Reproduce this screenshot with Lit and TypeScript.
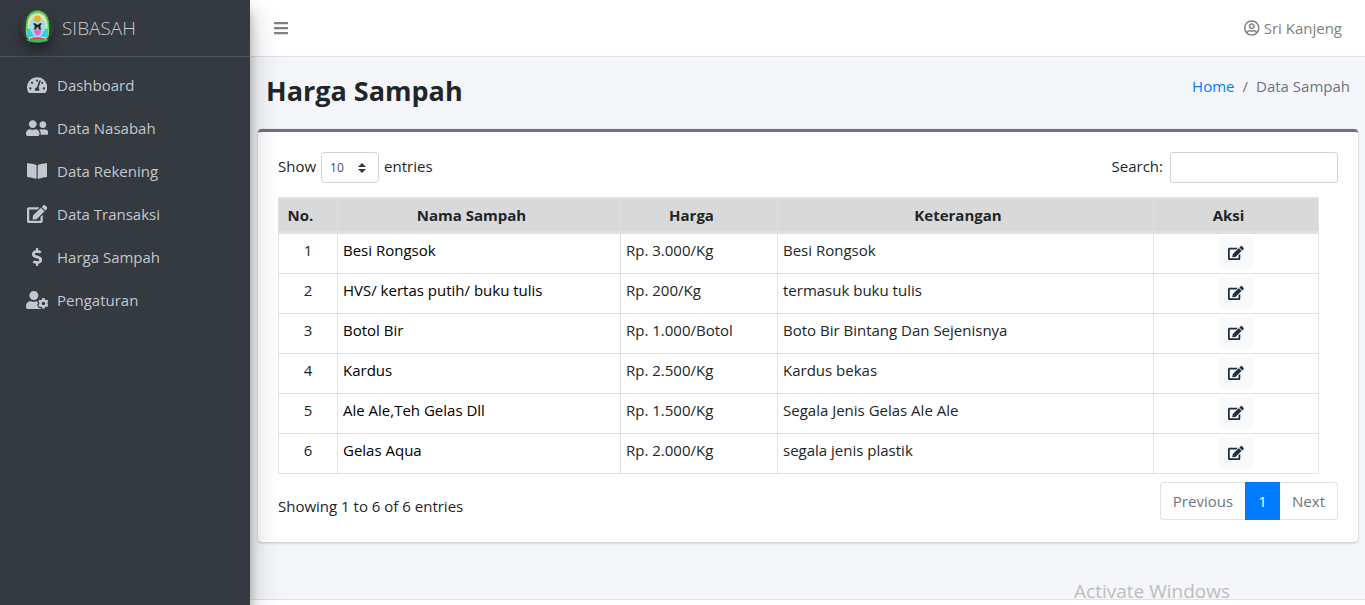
import { LitElement, html, svg, css } from "lit";
import { customElement, property, state } from "lit/decorators.js";

interface Glyph {
  w: number;
  d: string;
}

const GLYPHS: Record<string, Glyph> = {
  bars: {
    w: 448,
    d: "M16 132h416c8.837 0 16-7.163 16-16V76c0-8.837-7.163-16-16-16H16C7.163 60 0 67.163 0 76v40c0 8.837 7.163 16 16 16zm0 160h416c8.837 0 16-7.163 16-16v-40c0-8.837-7.163-16-16-16H16c-8.837 0-16 7.163-16 16v40c0 8.837 7.163 16 16 16zm0 160h416c8.837 0 16-7.163 16-16v-40c0-8.837-7.163-16-16-16H16c-8.837 0-16 7.163-16 16v40c0 8.837 7.163 16 16 16z",
  },
  gauge: {
    w: 576,
    d: "M288 32C128.94 32 0 160.94 0 320c0 52.8 14.25 102.26 39.06 144.8 5.61 9.62 16.3 15.2 27.44 15.2h443c11.14 0 21.83-5.58 27.44-15.2C561.75 422.26 576 372.8 576 320c0-159.06-128.94-288-288-288zm0 64c14.71 0 26.58 10.13 30.32 23.65-1.11 2.26-2.64 4.23-3.45 6.67l-9.22 27.67c-5.13 3.49-10.97 6.01-17.64 6.01-17.67 0-32-14.33-32-32S270.33 96 288 96zM96 384c-17.67 0-32-14.33-32-32s14.33-32 32-32 32 14.33 32 32-14.33 32-32 32zm48-160c-17.67 0-32-14.33-32-32s14.33-32 32-32 32 14.33 32 32-14.33 32-32 32zm246.77-72.41l-61.33 184C343.13 347.33 352 364.54 352 384c0 11.72-3.38 22.55-8.88 32H232.88c-5.5-9.45-8.88-20.28-8.88-32 0-33.94 26.5-61.43 59.9-63.59l61.34-184.01c4.17-12.56 17.73-19.45 30.36-15.17 12.57 4.19 19.35 17.79 15.17 30.36zm14.66 57.2l15.52-46.55c3.47-1.29 7.13-2.23 11.05-2.23 17.67 0 32 14.33 32 32s-14.33 32-32 32c-11.38-.01-20.89-6.28-26.57-15.22zM480 384c-17.67 0-32-14.33-32-32s14.33-32 32-32 32 14.33 32 32-14.33 32-32 32z",
  },
  friends: {
    w: 640,
    d: "M192 256c61.9 0 112-50.1 112-112S253.9 32 192 32 80 82.1 80 144s50.1 112 112 112zm76.8 32h-8.3c-20.8 10-43.9 16-68.5 16s-47.6-6-68.5-16h-8.3C51.6 288 0 339.6 0 403.2V432c0 26.5 21.5 48 48 48h288c26.5 0 48-21.5 48-48v-28.8c0-63.6-51.6-115.2-115.2-115.2zM480 256c53 0 96-43 96-96s-43-96-96-96-96 43-96 96 43 96 96 96zm48 32h-3.8c-13.9 4.8-28.6 8-44.2 8s-30.3-3.2-44.2-8H432c-20.4 0-39.2 5.9-55.7 15.4 24.4 26.3 39.7 61.2 39.7 99.8v38.4c0 2.2-.5 4.3-.6 6.4H592c26.5 0 48-21.5 48-48 0-61.9-50.1-112-112-112z",
  },
  book: {
    w: 576,
    d: "M542.22 32.05c-54.8 3.11-163.72 14.43-230.96 55.59-4.64 2.84-7.27 7.89-7.27 13.17v363.87c0 11.55 12.63 18.85 23.28 13.49 69.18-34.82 169.23-44.32 218.7-46.92 16.89-.89 30.02-14.43 30.02-30.66V62.75c.01-17.71-15.35-31.74-33.77-30.7zM264.73 87.64C197.5 46.48 88.58 35.17 33.78 32.05 15.36 31.01 0 45.04 0 62.75V400.6c0 16.24 13.13 29.78 30.02 30.66 49.49 2.6 149.59 12.11 218.77 46.95 10.62 5.35 23.21-1.94 23.21-13.46V100.63c0-5.29-2.62-10.14-7.27-12.99z",
  },
  edit: {
    w: 576,
    d: "M402.6 83.2l90.2 90.2c3.8 3.8 3.8 10 0 13.8L274.4 405.6l-92.8 10.3c-12.4 1.4-22.9-9.1-21.5-21.5l10.3-92.8L388.8 83.2c3.8-3.8 10-3.8 13.8 0zm162-22.9l-48.8-48.8c-15.2-15.2-39.9-15.2-55.2 0l-35.4 35.4c-3.8 3.8-3.8 10 0 13.8l90.2 90.2c3.8 3.8 10 3.8 13.8 0l35.4-35.4c15.2-15.3 15.2-40 0-55.2zM384 346.2V448H64V128h229.8c3.2 0 6.2-1.3 8.5-3.5l40-40c7.6-7.6 2.2-20.5-8.5-20.5H48C21.5 64 0 85.5 0 112v352c0 26.5 21.5 48 48 48h352c26.5 0 48-21.5 48-48V306.2c0-10.7-12.9-16-20.5-8.5l-40 40c-2.2 2.3-3.5 5.3-3.5 8.5z",
  },
  dollar: {
    w: 288,
    d: "M209.2 233.4l-108-31.6C88.7 198.2 80 186.5 80 173.5c0-16.3 13.2-29.5 29.5-29.5h66.3c12.2 0 24.2 3.7 34.2 10.5 6.1 4.1 14.3 3.1 19.5-2l34.8-34c7.1-6.9 6.1-18.4-1.8-24.5C238 74.8 207.4 64.1 176 64V16c0-8.8-7.2-16-16-16h-32c-8.8 0-16 7.2-16 16v48h-2.5C45.8 64-5.4 118.7.5 183.6c4.2 46.1 39.4 83.6 83.8 96.6l102.5 30c12.5 3.7 21.2 15.3 21.2 28.3 0 16.3-13.2 29.5-29.5 29.5h-66.3C100 368 88 364.3 78 357.5c-6.1-4.1-14.3-3.1-19.5 2l-34.8 34c-7.1 6.9-6.1 18.4 1.8 24.5 24.5 19.2 55.1 29.9 86.5 30v48c0 8.8 7.2 16 16 16h32c8.8 0 16-7.2 16-16v-48.2c46.6-.9 90.3-28.6 105.7-72.7 21.5-61.6-14.6-124.8-72.5-141.7z",
  },
  cog: {
    w: 640,
    d: "M610.5 373.3c2.6-14.1 2.6-28.5 0-42.6l25.8-14.9c3-1.7 4.3-5.2 3.3-8.5-6.7-21.6-18.2-41.2-33.2-57.4-2.3-2.5-6-3.1-9-1.4l-25.8 14.9c-10.9-9.3-23.4-16.5-36.9-21.3v-29.8c0-3.4-2.4-6.4-5.7-7.1-22.3-5-45-4.8-66.2 0-3.3.7-5.7 3.7-5.7 7.1v29.8c-13.5 4.8-26 12-36.9 21.3l-25.8-14.9c-2.9-1.7-6.7-1.1-9 1.4-15 16.2-26.5 35.8-33.2 57.4-1 3.3.4 6.8 3.3 8.5l25.8 14.9c-2.6 14.1-2.6 28.5 0 42.6l-25.8 14.9c-3 1.7-4.3 5.2-3.3 8.5 6.7 21.6 18.2 41.1 33.2 57.4 2.3 2.5 6 3.1 9 1.4l25.8-14.9c10.9 9.3 23.4 16.5 36.9 21.3v29.8c0 3.4 2.4 6.4 5.7 7.1 22.3 5 45 4.8 66.2 0 3.3-.7 5.7-3.7 5.7-7.1v-29.8c13.5-4.8 26-12 36.9-21.3l25.8 14.9c2.9 1.7 6.7 1.1 9-1.4 15-16.2 26.5-35.8 33.2-57.4 1-3.3-.4-6.8-3.3-8.5l-25.8-14.9zM496 400.5c-26.8 0-48.5-21.8-48.5-48.5s21.8-48.5 48.5-48.5 48.5 21.8 48.5 48.5-21.7 48.5-48.5 48.5zM224 256c70.7 0 128-57.3 128-128S294.7 0 224 0 96 57.3 96 128s57.3 128 128 128zm201.2 226.5c-2.3-1.2-4.6-2.6-6.8-3.9l-7.9 4.6c-6 3.4-12.8 5.3-19.6 5.3-10.9 0-21.4-4.6-28.9-12.6-18.3-19.8-32.3-43.9-40.2-69.6-5.5-17.7 1.9-36.4 17.9-45.7l7.9-4.6c-.1-2.6-.1-5.2 0-7.8l-7.9-4.6c-16-9.2-23.4-28-17.9-45.7.9-2.9 2.2-5.8 3.2-8.7-3.8-.3-7.5-1.2-11.4-1.2h-16.7c-22.2 10.2-46.9 16-72.9 16s-50.6-5.8-72.9-16h-16.7C60.2 288 0 348.2 0 422.4V464c0 26.5 21.5 48 48 48h352c10.1 0 19.5-3.2 27.2-8.5-1.2-3.8-2-7.7-2-11.8v-9.2z",
  },
  account: {
    w: 496,
    d: "M248 104c-53 0-96 43-96 96s43 96 96 96 96-43 96-96-43-96-96-96zm0 144c-26.5 0-48-21.5-48-48s21.5-48 48-48 48 21.5 48 48-21.5 48-48 48zm0-240C111 8 0 119 0 256s111 248 248 248 248-111 248-248S385 8 248 8zm0 448c-49.7 0-95.1-18.3-130.1-48.4 14.9-23 40.4-38.6 69.6-39.5 20.8 6.4 40.6 9.6 60.5 9.6s39.7-3.1 60.5-9.6c29.2 1 54.7 16.5 69.6 39.5-35 30.1-80.4 48.4-130.1 48.4zm162.7-84.1c-24.4-31.4-62.1-51.9-105.1-51.9-10.2 0-26 9.6-57.6 9.6-31.5 0-47.4-9.6-57.6-9.6-42.9 0-80.6 20.5-105.1 51.9C61.9 339.2 48 299.2 48 256c0-110.3 89.7-200 200-200s200 89.7 200 200c0 43.2-13.9 83.2-37.3 115.9z",
  },
};

@customElement("fa-icon")
class FaIcon extends LitElement {
  @property() name = "bars";

  static styles = css`
    :host {
      display: inline-flex;
      flex: none;
    }
    .glyph {
      display: block;
      height: 1em;
      fill: currentColor;
    }
  `;

  render() {
    const g = GLYPHS[this.name];
    return html`<svg class="glyph" viewBox="0 0 ${g.w} 512" aria-hidden="true">
      ${svg`<path d=${g.d}></path>`}
    </svg>`;
  }
}

@customElement("app-crest")
class AppCrest extends LitElement {
  static styles = css`
    :host {
      display: block;
      flex: none;
      width: 33px;
      height: 33px;
      border-radius: 50%;
      box-shadow: 0 10px 20px rgba(0, 0, 0, 0.19), 0 6px 6px rgba(0, 0, 0, 0.23);
    }
    .crest {
      display: block;
      width: 33px;
      height: 33px;
    }
  `;

  render() {
    return html`<svg class="crest" viewBox="0 0 33 33" role="img" aria-label="Logo">
      <path d="M6 28C4 22 4 10 8 5C12-1 21-1 25 5C29 10 29 22 27 28Z" fill="#62d45c" />
      <path d="M6 27C5 19 6 12 9 7C13 2 20 2 24 7C27 12 28 19 27 27Z" fill="#e6e4b8" />
      <path
        d="M6.500 20C4.500 15 6 8 8.500 5C12.500 0 20.500 0 24.500 5C27 8 28.500 15 26.500 20"
        fill="none"
        stroke="#3cc646"
        stroke-width="1.500"
        stroke-dasharray="2 1"
      />
      <path d="M8 26C7 19 8 13 11 9C14 6 19 6 22 9C25 13 26 19 25 26Z" fill="#a9dbe4" />
      <path d="M6 19Q8 17 10 21L13 26L20 26L23 21Q25 17 27 19L27 28L6 28Z" fill="#2fd3d6" />
      <path
        d="M16.500 4l1 2.200 2.300-.8-.8 2.300 2.200 1-2.200 1 .8 2.300-2.300-.8-1 2.200-1-2.200-2.300.8.800-2.300-2.200-1 2.200-1-.8-2.300 2.300.8z"
        fill="#e0b42a"
      />
      <path d="M12.500 13l2 .5 2 1.500 2-1.500 2-.5v1.500l-1 .5v3.500l1.500 1h-3.500v-2.500l-1 .8-1-.8v2.500h-3.500l1.500-1v-3.500l-1-.5z" fill="#1f2423" />
      <path d="M12.500 21Q16.500 19 20.500 21Q20 24 16.500 26Q13 24 12.500 21Z" fill="#e65fdc" />
      <path d="M8 27.500Q16.500 25 25 27.500L26 30Q16.500 28 7 30Z" fill="#e8d8d4" />
      <path d="M9 28.500Q16.500 26 24 28.500L24 30Q16.500 28.500 9 30Z" fill="#d04456" />
      <path d="M5 29.500Q16.500 28.500 28 29.500Q26 32.500 16.500 32.500Q7 32.500 5 29.500Z" fill="#2fc24c" />
    </svg>`;
  }
}

const MENU = [
  { icon: "gauge", label: "Dashboard" },
  { icon: "friends", label: "Data Nasabah" },
  { icon: "book", label: "Data Rekening" },
  { icon: "edit", label: "Data Transaksi" },
  { icon: "dollar", label: "Harga Sampah" },
  { icon: "cog", label: "Pengaturan" },
];

const ROWS = [
  { name: "Besi Rongsok", price: "Rp. 3.000/Kg", note: "Besi Rongsok" },
  { name: "HVS/ kertas putih/ buku tulis", price: "Rp. 200/Kg", note: "termasuk buku tulis" },
  { name: "Botol Bir", price: "Rp. 1.000/Botol", note: "Boto Bir Bintang Dan Sejenisnya" },
  { name: "Kardus", price: "Rp. 2.500/Kg", note: "Kardus bekas" },
  { name: "Ale Ale,Teh Gelas Dll", price: "Rp. 1.500/Kg", note: "Segala Jenis Gelas Ale Ale" },
  { name: "Gelas Aqua", price: "Rp. 2.000/Kg", note: "segala jenis plastik" },
];

@customElement("app-root")
class AppRoot extends LitElement {
  @state() private query = "";

  static styles = css`
    :host {
      display: flex;
      height: 100vh;
      overflow: hidden;
      position: relative;
      background: #f4f6f9;
      color: #212529;
      font: 400 15px/24px "Open Sans", "Noto Sans", sans-serif;
    }
    * {
      box-sizing: border-box;
    }
    a {
      text-decoration: none;
    }

    .sidebar {
      position: relative;
      z-index: 2;
      flex: none;
      width: 250px;
      background: #343a40;
      color: #c2c7d0;
      box-shadow: 0 14px 28px rgba(0, 0, 0, 0.25), 0 10px 10px rgba(0, 0, 0, 0.22);
    }
    .brand {
      display: flex;
      align-items: center;
      gap: 8px;
      height: 57px;
      padding: 0 21px 3px;
      border-bottom: 1px solid #4b545c;
      color: #c9cccf;
      font-size: 19px;
      font-weight: 300;
    }
    .brand-name {
      padding-top: 3px;
    }
    .menu {
      display: flex;
      flex-direction: column;
      gap: 3px;
      margin: 0;
      padding: 8px;
      list-style: none;
    }
    .menu-link {
      display: flex;
      align-items: center;
      gap: 7px;
      height: 40px;
      padding: 0 16px;
      color: inherit;
    }
    .menu-icon {
      justify-content: center;
      width: 26px;
      font-size: 18px;
    }

    .page {
      display: flex;
      flex-direction: column;
      flex: 1;
      min-width: 0;
    }
    .topbar {
      display: flex;
      flex: none;
      align-items: center;
      justify-content: space-between;
      height: 57px;
      padding: 0 23px 0 24px;
      background: #fff;
      border-bottom: 1px solid #dee2e6;
      color: #808080;
    }
    .toggle {
      display: flex;
      padding: 0;
      border: 0;
      background: none;
      color: #808080;
      font-size: 16px;
    }
    .user {
      display: flex;
      align-items: center;
      gap: 4px;
      color: #808080;
    }
    .user-icon {
      font-size: 16px;
    }
    .heading {
      display: flex;
      justify-content: space-between;
      padding: 17px 15px 21px 16px;
    }
    .title {
      margin: 0;
      font-size: 27px;
      line-height: 34px;
      font-weight: 700;
    }
    .crumbs {
      display: flex;
      gap: 8px;
      margin: 0;
      padding: 0;
      list-style: none;
      color: #6c757d;
    }
    .crumb-link {
      color: #007bff;
    }

    .card {
      margin: 0 7px 57px 8px;
      padding: 20px 20px 22px;
      background: #fff;
      border-top: 3px solid #6c757d;
      border-radius: 4px;
      box-shadow: 0 0 1px rgba(0, 0, 0, 0.125), 0 1px 3px rgba(0, 0, 0, 0.2);
    }
    .tools {
      display: flex;
      justify-content: space-between;
      margin-bottom: 14px;
    }
    .field {
      display: flex;
      gap: 5px;
      line-height: 28px;
    }
    .field-search {
      gap: 7px;
    }
    .length {
      appearance: none;
      width: 58px;
      height: 31px;
      padding: 0 24px 0 8px;
      border: 1px solid #ced4da;
      border-radius: 4px;
      background: #fff
        url("data:image/svg+xml,%3csvg xmlns='http://www.w3.org/2000/svg' viewBox='0 0 4 5'%3e%3cpath fill='%23343a40' d='M2 0L0 2h4zm0 5L0 3h4z'/%3e%3c/svg%3e")
        no-repeat right 12px center / 8px 10px;
      color: #495057;
      font: 400 12px/20px "Open Sans", "Noto Sans", sans-serif;
    }
    .search {
      width: 168px;
      height: 31px;
      padding: 4px 8px;
      border: 1px solid #ced4da;
      border-radius: 3px;
      background: #fff;
      color: #495057;
      font: 400 12px/20px "Open Sans", "Noto Sans", sans-serif;
    }

    .table-wrap {
      padding-right: 19px;
    }
    .grid {
      width: 100%;
      table-layout: fixed;
      border-collapse: collapse;
    }
    .col-no {
      width: 59px;
    }
    .col-name {
      width: 283px;
    }
    .col-price {
      width: 157px;
    }
    .col-note {
      width: 376px;
    }
    .col-act {
      width: 165px;
    }
    .grid th {
      height: 34px;
      padding: 0 20px 0 5px;
      background: #d9d9d9;
      border: 1px solid #dee2e6;
      border-width: 2px 1px 3px;
      font-weight: 700;
      text-align: center;
    }
    .grid td {
      height: 40px;
      padding: 4px 5px;
      border: 1px solid #dee2e6;
      vertical-align: top;
    }
    .grid .num {
      text-align: center;
    }
    .grid .name {
      color: #000;
    }
    .edit {
      display: flex;
      align-items: center;
      justify-content: center;
      width: 34px;
      height: 31px;
      margin: 0 auto;
      padding: 0;
      border: 0;
      border-radius: 3px;
      background: #f8f9fa;
      color: #1f2d3d;
      font-size: 14px;
    }

    .foot {
      display: flex;
      justify-content: space-between;
      margin-top: 8px;
    }
    .info {
      padding-top: 12px;
    }
    .pager {
      display: flex;
    }
    .page-btn {
      height: 38px;
      padding: 0 12px;
      border: 1px solid #dee2e6;
      background: #fff;
      color: #6c757d;
      font: inherit;
    }
    .page-prev {
      border-right: 0;
      border-radius: 4px 0 0 4px;
    }
    .page-next {
      border-left: 0;
      border-radius: 0 4px 4px 0;
    }
    .page-now {
      width: 35px;
      border-color: #007bff;
      background: #007bff;
      color: #fff;
    }

    .page-foot {
      flex: none;
      min-height: 57px;
      background: #fff;
      border-top: 1px solid #dee2e6;
    }
    .watermark {
      position: absolute;
      right: 135px;
      bottom: 0;
      color: #bcbdbf;
      font-size: 19px;
      line-height: 28px;
      pointer-events: none;
    }
  `;

  private onSearch(e: Event) {
    this.query = (e.target as HTMLInputElement).value.toLowerCase();
  }

  render() {
    const rows = ROWS.filter((r) =>
      (r.name + r.price + r.note).toLowerCase().includes(this.query)
    );
    return html`
      <aside class="sidebar">
        <div class="brand">
          <app-crest></app-crest>
          <span class="brand-name">SIBASAH</span>
        </div>
        <nav>
          <ul class="menu">
            ${MENU.map(
              (m) => html`<li>
                <a class="menu-link" href="#">
                  <fa-icon class="menu-icon" name=${m.icon}></fa-icon>
                  <span>${m.label}</span>
                </a>
              </li>`
            )}
          </ul>
        </nav>
      </aside>

      <div class="page">
        <header class="topbar">
          <button class="toggle" aria-label="Menu"><fa-icon name="bars"></fa-icon></button>
          <a class="user" href="#">
            <fa-icon class="user-icon" name="account"></fa-icon>
            <span>Sri Kanjeng</span>
          </a>
        </header>

        <div class="heading">
          <h1 class="title">Harga Sampah</h1>
          <ol class="crumbs">
            <li><a class="crumb-link" href="#">Home</a></li>
            <li>/</li>
            <li>Data Sampah</li>
          </ol>
        </div>

        <main class="card">
          <div class="tools">
            <div class="field">
              <label for="length">Show</label>
              <select id="length" class="length">
                <option>10</option>
                <option>25</option>
                <option>50</option>
                <option>100</option>
              </select>
              <span>entries</span>
            </div>
            <div class="field field-search">
              <label for="search">Search:</label>
              <input id="search" class="search" type="search" @input=${this.onSearch} />
            </div>
          </div>

          <div class="table-wrap">
            <table class="grid">
              <colgroup>
                <col class="col-no" />
                <col class="col-name" />
                <col class="col-price" />
                <col class="col-note" />
                <col class="col-act" />
              </colgroup>
              <thead>
                <tr>
                  <th>No.</th>
                  <th>Nama Sampah</th>
                  <th>Harga</th>
                  <th>Keterangan</th>
                  <th>Aksi</th>
                </tr>
              </thead>
              <tbody>
                ${rows.map(
                  (r, i) => html`<tr>
                    <td class="num">${i + 1}</td>
                    <td class="name">${r.name}</td>
                    <td>${r.price}</td>
                    <td>${r.note}</td>
                    <td>
                      <button class="edit" aria-label="Edit ${r.name}">
                        <fa-icon name="edit"></fa-icon>
                      </button>
                    </td>
                  </tr>`
                )}
              </tbody>
            </table>
          </div>

          <div class="foot">
            <div class="info">Showing 1 to ${rows.length} of ${rows.length} entries</div>
            <div class="pager">
              <button class="page-btn page-prev">Previous</button>
              <button class="page-btn page-now">1</button>
              <button class="page-btn page-next">Next</button>
            </div>
          </div>
        </main>

        <footer class="page-foot"></footer>
      </div>

      <div class="watermark">Activate Windows</div>
    `;
  }
}
